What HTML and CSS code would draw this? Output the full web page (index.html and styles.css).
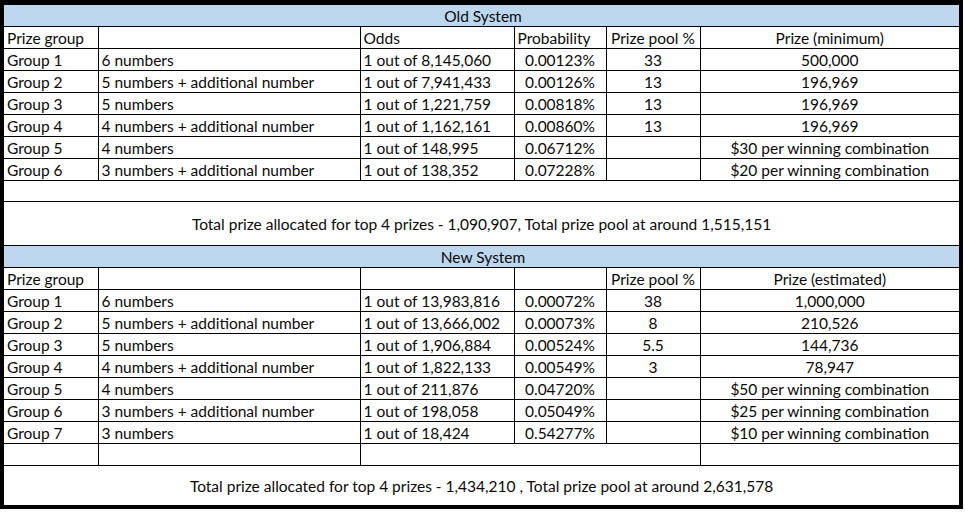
FILE: index.html
```html
<!DOCTYPE html>
<html>
<head>
<meta charset="utf-8">
<link rel="stylesheet" href="styles.css">
</head>
<body>
<div class="frame">
<table class="sheet">
<colgroup>
<col class="c1"><col class="c2"><col class="c3"><col class="c4"><col class="c5"><col class="c6">
</colgroup>
<tbody>
<tr class="title"><td colspan="6">Old System</td></tr>
<tr><td>Prize group</td><td></td><td>Odds</td><td>Probability</td><td class="ctr">Prize pool %</td><td class="ctr">Prize (minimum)</td></tr>
<tr><td>Group 1</td><td>6 numbers</td><td>1 out of 8,145,060</td><td class="ctr">0.00123%</td><td class="ctr">33</td><td class="ctr">500,000</td></tr>
<tr><td>Group 2</td><td>5 numbers + additional number</td><td>1 out of 7,941,433</td><td class="ctr">0.00126%</td><td class="ctr">13</td><td class="ctr">196,969</td></tr>
<tr><td>Group 3</td><td>5 numbers</td><td>1 out of 1,221,759</td><td class="ctr">0.00818%</td><td class="ctr">13</td><td class="ctr">196,969</td></tr>
<tr><td>Group 4</td><td>4 numbers + additional number</td><td>1 out of 1,162,161</td><td class="ctr">0.00860%</td><td class="ctr">13</td><td class="ctr">196,969</td></tr>
<tr><td>Group 5</td><td>4 numbers</td><td>1 out of 148,995</td><td class="ctr">0.06712%</td><td></td><td class="ctr">$30 per winning combination</td></tr>
<tr><td>Group 6</td><td>3 numbers + additional number</td><td>1 out of 138,352</td><td class="ctr">0.07228%</td><td></td><td class="ctr">$20 per winning combination</td></tr>
<tr class="blank"><td colspan="6"></td></tr>
<tr class="total"><td colspan="6">Total prize allocated for top 4 prizes - 1,090,907, Total prize pool at around 1,515,151</td></tr>
<tr class="title"><td colspan="6">New System</td></tr>
<tr><td>Prize group</td><td></td><td></td><td></td><td class="ctr">Prize pool %</td><td class="ctr">Prize (estimated)</td></tr>
<tr><td>Group 1</td><td>6 numbers</td><td>1 out of 13,983,816</td><td class="ctr">0.00072%</td><td class="ctr">38</td><td class="ctr">1,000,000</td></tr>
<tr><td>Group 2</td><td>5 numbers + additional number</td><td>1 out of 13,666,002</td><td class="ctr">0.00073%</td><td class="ctr">8</td><td class="ctr">210,526</td></tr>
<tr><td>Group 3</td><td>5 numbers</td><td>1 out of 1,906,884</td><td class="ctr">0.00524%</td><td class="ctr">5.5</td><td class="ctr">144,736</td></tr>
<tr><td>Group 4</td><td>4 numbers + additional number</td><td>1 out of 1,822,133</td><td class="ctr">0.00549%</td><td class="ctr">3</td><td class="ctr">78,947</td></tr>
<tr><td>Group 5</td><td>4 numbers</td><td>1 out of 211,876</td><td class="ctr">0.04720%</td><td></td><td class="ctr">$50 per winning combination</td></tr>
<tr><td>Group 6</td><td>3 numbers + additional number</td><td>1 out of 198,058</td><td class="ctr">0.05049%</td><td></td><td class="ctr">$25 per winning combination</td></tr>
<tr><td>Group 7</td><td>3 numbers</td><td>1 out of 18,424</td><td class="ctr">0.54277%</td><td></td><td class="ctr">$10 per winning combination</td></tr>
<tr class="blank2"><td></td><td></td><td colspan="3"></td><td></td></tr>
<tr class="total total2"><td colspan="6">Total prize allocated for top 4 prizes - 1,434,210 , Total prize pool at around 2,631,578</td></tr>
</tbody>
</table>
</div>
</body>
</html>
```
FILE: styles.css
```css
html, body {
  margin: 0;
  padding: 0;
  background: #ffffff;
}
.frame {
  width: 955px;
  border: 4px solid #000;
  border-top-width: 5px;
  background: #fff;
}
.sheet {
  width: 955px;
  border-collapse: collapse;
  table-layout: fixed;
  font-family: Lato, "Open Sans", sans-serif;
  font-size: 15.5px;
  color: #0a0a0a;
}
.c1 { width: 94px; }
.c2 { width: 262px; }
.c3 { width: 154px; }
.c4 { width: 92px; }
.c5 { width: 94px; }
.c6 { width: 259px; }
.sheet td {
  height: 20px;
  padding: 1px 0 0 3px;
  border: 1px solid #000;
  white-space: nowrap;
  overflow: hidden;
  line-height: 20px;
}
.sheet tr:first-child td { border-top: none; }
.sheet td:first-child { border-left: none; }
.sheet td:last-child { border-right: none; }
.sheet td.ctr { text-align: center; padding-left: 0; }
.title td {
  background: #bdd7ee;
  text-align: center;
}
.blank td { height: 19px; }
.total td {
  height: 42px;
  text-align: center;
  padding-left: 0;
}
.total2 td { height: 38px; border-bottom: none; }
```
